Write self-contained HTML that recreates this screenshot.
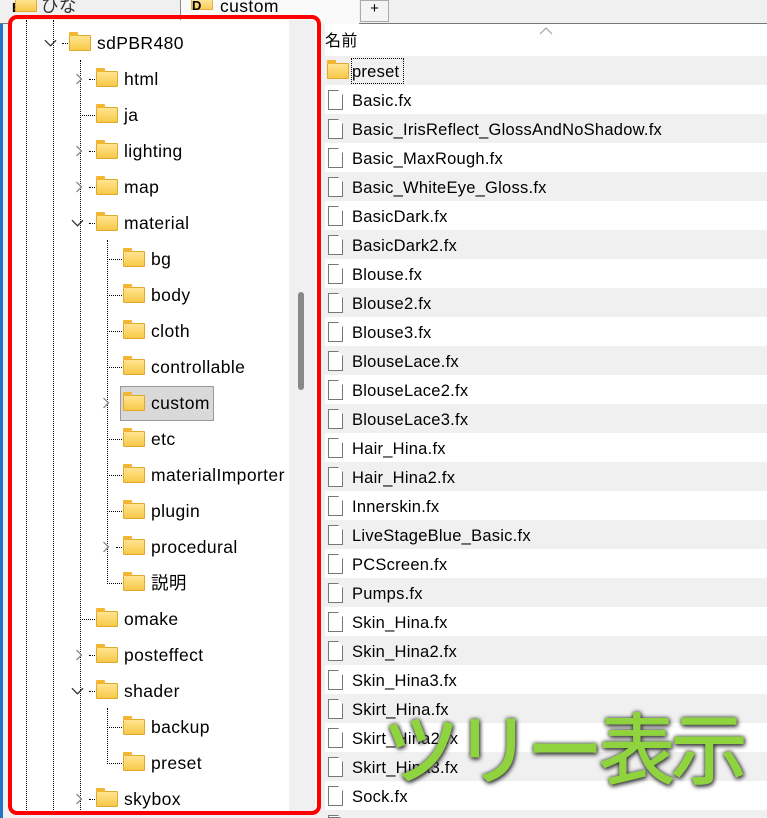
<!DOCTYPE html>
<html style="overflow:hidden"><head><meta charset="utf-8"><style>
*{margin:0;padding:0;box-sizing:border-box}
html,body{width:767px;height:818px;overflow:hidden}
body{background:#fff;font-family:"Liberation Sans","Noto Sans CJK JP",sans-serif;position:relative;color:#000}
.a{position:absolute}
.top{left:0;top:0;width:767px;height:24px;background:#f0f0f0;border-bottom:1px solid #777}
.lp{left:0;top:24px;width:322px;height:794px;background:#f0f0f0}
.tree{left:12px;top:20px;width:305px;height:792px;background:#fff}
.sb{left:289px;top:20px;width:26px;height:792px;background:#f0f0f0}
.thumb{left:298px;top:292px;width:6px;height:98px;background:#888;border-radius:3px}
.red{left:8px;top:15px;width:313px;height:800px;border:4px solid #f00;border-radius:9px}
.vl{border-left:1px dotted #000;width:0}
.hl{border-top:1px dotted #000;height:0}
.fd{width:22px;height:16px;background:linear-gradient(#ffe490,#f8c94a);border:1px solid #e0a92a;border-radius:1px}
.fd:before{content:"";position:absolute;left:-1px;top:-4px;width:9px;height:4px;background:#f2b534;border-radius:1px 1px 0 0}
.t{font-size:17.5px;letter-spacing:.4px;line-height:20px;white-space:nowrap}
.row{left:322px;width:445px;height:29px}
.row.s{background:#f0f0f0}
.fi{width:15px;height:20px;border:1px solid #777;background:#fff;clip-path:polygon(0 0,10px 0,15px 5px,15px 20px,0 20px)}
.rt{left:352px;font-size:16.5px;letter-spacing:.25px;line-height:20px;white-space:nowrap}
</style></head><body>
<svg width="0" height="0" style="position:absolute"><defs>
<symbol id="r" viewBox="0 0 8 12"><polyline points="1.5,1 6.5,6 1.5,11" fill="none" stroke="#8a8a8a" stroke-width="1.3"/></symbol>
<symbol id="d" viewBox="0 0 14 8"><polyline points="1,1 7,7 13,1" fill="none" stroke="#333" stroke-width="1.4"/></symbol>
</defs></svg>
<div class="a top"></div>
<div class="a" style="left:12px;top:0;font-size:13px;font-weight:bold">E</div>
<div class="a fd" style="left:15px;top:0;height:12px;border-top:none"></div>
<div class="a t" style="left:41px;top:-4px;color:#333">ひな</div>
<div class="a" style="left:180px;top:0;width:1px;height:24px;background:#888"></div>
<div class="a" style="left:181px;top:0;width:178px;height:24px;background:#fafafa"></div>
<div class="a fd" style="left:191px;top:0;height:10px;border-top:none;opacity:.9"></div>
<div class="a" style="left:192px;top:-2px;font-size:13px;font-weight:bold;z-index:2">D</div>
<div class="a t" style="left:220px;top:-4px">custom</div>
<div class="a" style="left:360px;top:0;width:29px;height:22px;border:1px solid #aaa;background:#f4f4f4;text-align:center;font-size:15px;line-height:16px">+</div>
<div class="a" style="left:0;top:24px;width:3px;height:794px;background:#1f74c7"></div>
<div class="a lp" style="left:3px"></div>
<div class="a tree"></div>
<div class="a sb"></div>
<div class="a thumb"></div>

<div class="a vl" style="left:26px;top:20px;height:792px"></div>
<div class="a vl" style="left:53px;top:20px;height:792px"></div>
<div class="a vl" style="left:80px;top:60px;height:752px"></div>
<div class="a vl" style="left:107px;top:240px;height:344px"></div>
<div class="a vl" style="left:107px;top:708px;height:56px"></div>

<svg class="a" style="left:44px;top:39px" width="13" height="8"><use href="#d"/></svg>
<div class="a hl" style="left:62px;top:43px;width:6px"></div>
<div class="a fd" style="left:69px;top:35px"></div>
<div class="a t" style="left:97px;top:33px">sdPBR480</div>

<svg class="a" style="left:75px;top:73px" width="8" height="12"><use href="#r"/></svg><div class="a hl" style="left:89px;top:79px;width:6px"></div><div class="a fd" style="left:96px;top:71px"></div><div class="a t" style="left:124px;top:69px">html</div>
<div class="a hl" style="left:80px;top:115px;width:15px"></div><div class="a fd" style="left:96px;top:107px"></div><div class="a t" style="left:124px;top:105px">ja</div>
<svg class="a" style="left:75px;top:145px" width="8" height="12"><use href="#r"/></svg><div class="a hl" style="left:89px;top:151px;width:6px"></div><div class="a fd" style="left:96px;top:143px"></div><div class="a t" style="left:124px;top:141px">lighting</div>
<svg class="a" style="left:75px;top:181px" width="8" height="12"><use href="#r"/></svg><div class="a hl" style="left:89px;top:187px;width:6px"></div><div class="a fd" style="left:96px;top:179px"></div><div class="a t" style="left:124px;top:177px">map</div>
<svg class="a" style="left:71px;top:219px" width="13" height="8"><use href="#d"/></svg><div class="a hl" style="left:89px;top:223px;width:6px"></div><div class="a fd" style="left:96px;top:215px"></div><div class="a t" style="left:124px;top:213px">material</div>

<div class="a hl" style="left:107px;top:259px;width:15px"></div><div class="a fd" style="left:123px;top:251px"></div><div class="a t" style="left:151px;top:249px">bg</div>
<div class="a hl" style="left:107px;top:295px;width:15px"></div><div class="a fd" style="left:123px;top:287px"></div><div class="a t" style="left:151px;top:285px">body</div>
<div class="a hl" style="left:107px;top:331px;width:15px"></div><div class="a fd" style="left:123px;top:323px"></div><div class="a t" style="left:151px;top:321px">cloth</div>
<div class="a hl" style="left:107px;top:367px;width:15px"></div><div class="a fd" style="left:123px;top:359px"></div><div class="a t" style="left:151px;top:357px">controllable</div>
<div class="a" style="left:120px;top:386px;width:94px;height:35px;background:#d9d9d9;border:1px solid #999"></div>
<svg class="a" style="left:102px;top:397px" width="8" height="12"><use href="#r"/></svg><div class="a fd" style="left:123px;top:395px"></div><div class="a t" style="left:151px;top:393px">custom</div>
<div class="a hl" style="left:107px;top:439px;width:15px"></div><div class="a fd" style="left:123px;top:431px"></div><div class="a t" style="left:151px;top:429px">etc</div>
<div class="a hl" style="left:107px;top:475px;width:15px"></div><div class="a fd" style="left:123px;top:467px"></div><div class="a t" style="left:151px;top:465px">materialImporter</div>
<div class="a hl" style="left:107px;top:511px;width:15px"></div><div class="a fd" style="left:123px;top:503px"></div><div class="a t" style="left:151px;top:501px">plugin</div>
<svg class="a" style="left:102px;top:541px" width="8" height="12"><use href="#r"/></svg><div class="a hl" style="left:116px;top:547px;width:6px"></div><div class="a fd" style="left:123px;top:539px"></div><div class="a t" style="left:151px;top:537px">procedural</div>
<div class="a hl" style="left:107px;top:583px;width:15px"></div><div class="a fd" style="left:123px;top:575px"></div><div class="a t" style="left:151px;top:573px">説明</div>

<div class="a hl" style="left:80px;top:619px;width:15px"></div><div class="a fd" style="left:96px;top:611px"></div><div class="a t" style="left:124px;top:609px">omake</div>
<svg class="a" style="left:75px;top:649px" width="8" height="12"><use href="#r"/></svg><div class="a hl" style="left:89px;top:655px;width:6px"></div><div class="a fd" style="left:96px;top:647px"></div><div class="a t" style="left:124px;top:645px">posteffect</div>
<svg class="a" style="left:71px;top:687px" width="13" height="8"><use href="#d"/></svg><div class="a hl" style="left:89px;top:691px;width:6px"></div><div class="a fd" style="left:96px;top:683px"></div><div class="a t" style="left:124px;top:681px">shader</div>
<div class="a hl" style="left:107px;top:727px;width:15px"></div><div class="a fd" style="left:123px;top:719px"></div><div class="a t" style="left:151px;top:717px">backup</div>
<div class="a hl" style="left:107px;top:763px;width:15px"></div><div class="a fd" style="left:123px;top:755px"></div><div class="a t" style="left:151px;top:753px">preset</div>
<svg class="a" style="left:75px;top:793px" width="8" height="12"><use href="#r"/></svg><div class="a hl" style="left:89px;top:799px;width:6px"></div><div class="a fd" style="left:96px;top:791px"></div><div class="a t" style="left:124px;top:789px">skybox</div>

<div class="a red"></div>

<svg class="a" style="left:539px;top:27px" width="14" height="8"><polyline points="1,7 7,1 13,7" fill="none" stroke="#999" stroke-width="1"/></svg>
<div class="a t" style="left:325px;top:32px;font-size:16px">名前</div>

<div class="a row s" style="top:56px"></div>
<div class="a row s" style="top:114px"></div>
<div class="a row s" style="top:172px"></div>
<div class="a row s" style="top:230px"></div>
<div class="a row s" style="top:288px"></div>
<div class="a row s" style="top:346px"></div>
<div class="a row s" style="top:404px"></div>
<div class="a row s" style="top:462px"></div>
<div class="a row s" style="top:520px"></div>
<div class="a row s" style="top:578px"></div>
<div class="a row s" style="top:636px"></div>
<div class="a row s" style="top:694px"></div>
<div class="a row s" style="top:752px"></div>
<div class="a row s" style="top:810px;height:8px"></div>

<div class="a fd" style="left:327px;top:63px;width:22px"></div>
<div class="a" style="left:351px;top:58px;width:53px;height:26px;border:1px dotted #000"></div>
<div class="a rt" style="top:62px">preset</div>

<div class="a rt" style="top:91px">Basic.fx</div>
<div class="a rt" style="top:120px">Basic_IrisReflect_GlossAndNoShadow.fx</div>
<div class="a rt" style="top:149px">Basic_MaxRough.fx</div>
<div class="a rt" style="top:178px">Basic_WhiteEye_Gloss.fx</div>
<div class="a rt" style="top:207px">BasicDark.fx</div>
<div class="a rt" style="top:236px">BasicDark2.fx</div>
<div class="a rt" style="top:265px">Blouse.fx</div>
<div class="a rt" style="top:294px">Blouse2.fx</div>
<div class="a rt" style="top:323px">Blouse3.fx</div>
<div class="a rt" style="top:352px">BlouseLace.fx</div>
<div class="a rt" style="top:381px">BlouseLace2.fx</div>
<div class="a rt" style="top:410px">BlouseLace3.fx</div>
<div class="a rt" style="top:439px">Hair_Hina.fx</div>
<div class="a rt" style="top:468px">Hair_Hina2.fx</div>
<div class="a rt" style="top:497px">Innerskin.fx</div>
<div class="a rt" style="top:526px">LiveStageBlue_Basic.fx</div>
<div class="a rt" style="top:555px">PCScreen.fx</div>
<div class="a rt" style="top:584px">Pumps.fx</div>
<div class="a rt" style="top:613px">Skin_Hina.fx</div>
<div class="a rt" style="top:642px">Skin_Hina2.fx</div>
<div class="a rt" style="top:671px">Skin_Hina3.fx</div>
<div class="a rt" style="top:700px">Skirt_Hina.fx</div>
<div class="a rt" style="top:729px">Skirt_Hina2.fx</div>
<div class="a rt" style="top:758px">Skirt_Hina3.fx</div>
<div class="a rt" style="top:787px">Sock.fx</div>

<div class="a fi" style="left:328px;top:90px"></div>
<div class="a fi" style="left:328px;top:119px"></div>
<div class="a fi" style="left:328px;top:148px"></div>
<div class="a fi" style="left:328px;top:177px"></div>
<div class="a fi" style="left:328px;top:206px"></div>
<div class="a fi" style="left:328px;top:235px"></div>
<div class="a fi" style="left:328px;top:264px"></div>
<div class="a fi" style="left:328px;top:293px"></div>
<div class="a fi" style="left:328px;top:322px"></div>
<div class="a fi" style="left:328px;top:351px"></div>
<div class="a fi" style="left:328px;top:380px"></div>
<div class="a fi" style="left:328px;top:409px"></div>
<div class="a fi" style="left:328px;top:438px"></div>
<div class="a fi" style="left:328px;top:467px"></div>
<div class="a fi" style="left:328px;top:496px"></div>
<div class="a fi" style="left:328px;top:525px"></div>
<div class="a fi" style="left:328px;top:554px"></div>
<div class="a fi" style="left:328px;top:583px"></div>
<div class="a fi" style="left:328px;top:612px"></div>
<div class="a fi" style="left:328px;top:641px"></div>
<div class="a fi" style="left:328px;top:670px"></div>
<div class="a fi" style="left:328px;top:699px"></div>
<div class="a fi" style="left:328px;top:728px"></div>
<div class="a fi" style="left:328px;top:757px"></div>
<div class="a fi" style="left:328px;top:786px"></div>
<div class="a fi" style="left:328px;top:815px;height:3px"></div>

<div class="a" style="left:382px;top:690px;font-family:'Noto Sans CJK JP',sans-serif;font-weight:500;font-size:78px;line-height:110px;color:#8fd43f;letter-spacing:-6px;text-shadow:0 0 4px #333,1px 2px 5px #444;white-space:nowrap">ツリー表示</div>
</body></html>
